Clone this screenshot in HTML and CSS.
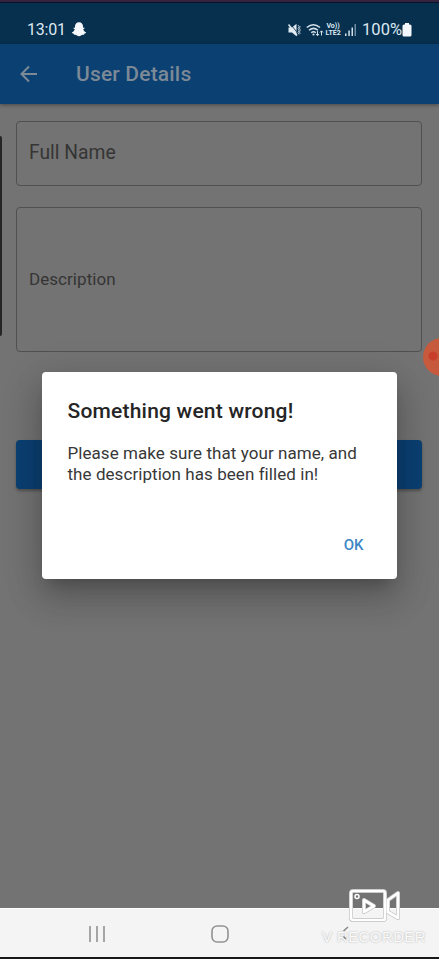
FILE: index.html
```html
<!DOCTYPE html>
<html lang="en">
<head>
<meta charset="utf-8">
<title>User Details</title>
<link rel="stylesheet" href="styles.css">
</head>
<body>
<div class="phone">
  <header class="status">
    <span class="clock">13:01</span>
    <svg class="ghost" width="16" height="15" viewBox="0 0 16 15"><path fill="#f4f8fc" d="M8 .3C5.500.3 4 2 4 4.300v1.500L2.700 5.600l-.2.900 1.300.8C3.300 8.900 2.200 10 .8 10.600c.2.900 1 .9 1.900 1.100l.4 1.100c1.500-.3 2.100.1 2.900.8 1.200 1 2.800 1 4 0 .8-.7 1.400-1.100 2.900-.8l.4-1.100c.9-.2 1.700-.2 1.900-1.100-1.400-.6-2.500-1.700-3-3.300l1.300-.8-.2-.9-1.300.2V4.300C12 2 10.500.3 8 .3z"/></svg>
    <div class="signals">
      <svg width="13" height="14" viewBox="0 0 13 14"><path fill="#e2ebf2" d="M.5 4.500H4L8.500.8v12.400L4 9.500H.5z"/><path d="M2.500 1l7 9" stroke="#07304f" stroke-width=".8"/><path d="M.5 1.500L9 12.500" stroke="#e2ebf2" stroke-width="1.500"/><path d="M10 2l1 1.500-1 2 1 2-1 2 1 2M12.200 3l-.7 2 .7 2-.7 2 .7 2" fill="none" stroke="#b9cad7" stroke-width=".9"/></svg>
      <svg class="wifi" width="18" height="14" viewBox="0 0 18 14"><g fill="none" stroke="#d3e0e9" stroke-width="1.500"><path d="M.8 4.500q6.500-5.500 13.200 0M3 7.300q4.500-3.800 9 0M5.200 9.800q2.300-2 4.600 0"/><path stroke-width="1" d="M11.500 8v4.500M10 11l1.500 1.700L13 11M15.500 12.500V8M14 9.500l1.500-1.700L17 9.500"/></g><circle cx="7.500" cy="11.500" r="1.100" fill="#d3e0e9"/></svg>
      <div class="lte"><span>Vo))</span><span>LTE2</span></div>
      <svg class="bars" width="12" height="12" viewBox="0 0 12 12"><path fill="#d3e0e9" d="M0 9.500h1.500V12H0zM3.300 6.500h1.500V12H3.300zM6.500 3.500H8V12H6.500z"/><path fill="#6f8b9f" d="M9.500 0H11v12H9.500z"/></svg>
      <span class="percent">100%</span>
      <svg class="battery" width="10" height="14" viewBox="0 0 10 14"><path fill="#f4f8fc" d="M3 0h4v1.500h1q1.500 0 1.500 1.500v9q0 1.500-1.500 1.500H2Q.5 13.500.5 12V3Q.5 1.500 2 1.500h1z"/></svg>
    </div>
  </header>
  <nav class="appbar">
    <svg width="18" height="18" viewBox="0 0 18 18"><path d="M17 9H2M9 1.500L1.500 9 9 16.500" fill="none" stroke="#7c8996" stroke-width="2"/></svg>
    <h1>User Details</h1>
  </nav>
  <main class="form">
    <div class="field name"><span>Full Name</span></div>
    <div class="field description"><span>Description</span></div>
    <div class="submit"></div>
  </main>
  <footer class="navigation">
    <svg class="recents" width="18" height="18" viewBox="0 0 18 18"><path d="M2 1v16M9 1v16M16 1v16" stroke="#929292" stroke-width="1.600"/></svg>
    <svg class="home" width="18" height="18" viewBox="0 0 18 18"><rect x="1" y="1" width="16" height="16" rx="5" fill="none" stroke="#929292" stroke-width="1.600"/></svg>
  </footer>
  <div class="edge"></div>
  <div class="record"></div>
  <section class="dialog">
    <h2>Something went wrong!</h2>
    <p>Please make sure that your name, and<br>the description has been filled in!</p>
    <span class="ok">OK</span>
  </section>
  <div class="watermark">
    <svg width="52" height="34" viewBox="0 0 52 34"><g fill="none" stroke="#bdbdbd" stroke-width="4" stroke-linejoin="round"><rect x="2" y="2" width="34" height="29" rx="2"/><path d="M39 11l10-7v25l-10-6zM15 11v12l10-6z"/></g><g fill="none" stroke="#fff" stroke-width="2.700" stroke-linejoin="round"><rect x="2" y="2" width="34" height="29" rx="2"/><path d="M39 11l10-7v25l-10-6zM15 11v12l10-6z"/><circle cx="8" cy="7.500" r="2" stroke-width="1.500"/></g></svg>
    <div class="brand">V RECORDER</div>
    <svg class="back" width="7" height="15" viewBox="0 0 7 15"><path d="M6 1L1.500 5M1.500 10.500L4 13" stroke="#858585" stroke-width="1.500"/></svg>
  </div>
</div>
</body>
</html>
```
FILE: styles.css
```css
* { box-sizing: border-box; }
body { margin: 0; font-family: Roboto, sans-serif; }
h1, h2, p { margin: 0; }
svg { display: block; flex: none; }
.phone { position: relative; width: 439px; height: 959px; overflow: hidden; display: flex; flex-direction: column; background: #737373; }
.status { height: 44px; flex: none; display: flex; align-items: center; padding: 13px 27px 0 27px; background: #07304f; border-top: 2px solid #35233f; box-shadow: inset 0 1px #071426; color: #dce7ef; white-space: nowrap; }
.clock { font-size: 16px; line-height: 20px; letter-spacing: -.2px; }
.ghost { margin-left: 5px; }
.signals { display: flex; align-items: center; margin-left: auto; }
.wifi { margin-left: 5px; }
.lte { width: 18px; font-size: 7px; line-height: 7px; font-weight: 700; display: flex; flex-direction: column; align-items: center; }
.bars { margin-left: 3px; }
.percent { font-size: 16.500px; line-height: 20px; margin-left: 5px; }
.battery { margin-left: 0; }
.appbar { height: 60px; flex: none; display: flex; align-items: center; padding-left: 20px; background: #0b4073; box-shadow: 0 1px 4px rgba(0,0,0,.4); }
.appbar h1 { margin-left: 38px; color: #7c8996; font-size: 21px; font-weight: 500; line-height: 24px; letter-spacing: .18px; }
.form { flex: 1; padding: 17px 17px 0 16px; display: flex; flex-direction: column; }
.field { border: 1px solid #505050; border-radius: 4px; display: flex; align-items: center; padding-left: 12px; color: #353535; }
.name { height: 65px; font-size: 19.300px; padding-bottom: 2px; }
.description { height: 145px; margin-top: 21px; font-size: 17px; letter-spacing: .05px; padding-bottom: 2px; }
.submit { height: 49px; margin-top: 88px; border-radius: 4px; background: #0b4073; box-shadow: 0 2px 3px rgba(0,0,0,.3); }
.navigation { height: 51px; flex: none; background: #f4f4f4; border-top: 1px solid #fff; border-bottom: 2px solid #18181a; display: flex; align-items: center; padding: 2px 0 0 88px; }
.home { margin-left: 105px; }
.edge { position: absolute; left: 0; top: 136px; width: 2px; height: 200px; background: #252525; border-radius: 0 2px 2px 0; }
.record { position: absolute; left: 423px; top: 338px; width: 38px; height: 38px; border-radius: 50%; background: radial-gradient(circle at 10px 18px, #c93d2b 0 4px, #c7593d 5px); }
.dialog { position: absolute; left: 41.500px; top: 372px; width: 355px; height: 207px; padding: 26px; border-radius: 4px; background: #fff; box-shadow: 0 11px 15px -7px rgba(0,0,0,.2), 0 20px 34px 3px rgba(0,0,0,.14), 0 9px 40px 4px rgba(0,0,0,.12); color: #252525; }
.dialog h2 { font-size: 21px; line-height: 26px; font-weight: 500; letter-spacing: .21px; white-space: nowrap; }
.dialog p { margin-top: 19px; font-size: 17px; line-height: 21px; letter-spacing: .06px; color: #383838; white-space: nowrap; }
.ok { display: block; margin: 50px 7px 0 0; text-align: right; font-size: 15px; line-height: 20px; font-weight: 500; color: #3c87c4; }
.watermark { position: absolute; left: 322px; top: 889px; width: 106px; height: 58px; }
.watermark svg { margin-left: 27px; }
.brand { margin-top: 5px; font-family: "Liberation Sans", sans-serif; font-size: 15px; line-height: 17px; letter-spacing: .4px; color: #fafafa; text-shadow: 0 0 2px #a8a8a8; white-space: nowrap; }
.watermark .back { position: absolute; left: 20px; top: 37px; margin: 0; }
```
